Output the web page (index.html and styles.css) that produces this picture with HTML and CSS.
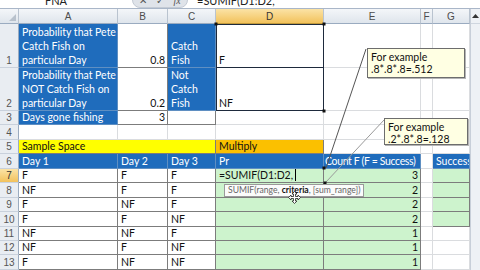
FILE: index.html
```html
<!DOCTYPE html>
<html>
<head>
<meta charset="utf-8">
<link rel="stylesheet" href="styles.css">
</head>
<body>
<div class="app">
  <div class="fbar">
    <div class="fbar-in">
      <span class="namebox">FNA</span>
      <span class="fbtns"><span>✕</span><span>✓</span><span class="fx">fx</span></span>
      <span class="formula">=SUMIF(D1:D2,</span>
    </div>
  </div>
  <div class="main">
    <div class="sheet">
      <div class="h corner"></div><div class="h">A</div><div class="h">B</div><div class="h">C</div><div class="h sel">D</div><div class="h">E</div><div class="h">F</div><div class="h">G</div>

      <div class="n">1</div><div class="c t blue"><span>Probability that Pete<br>Catch Fish on<br>particular Day</span></div><div class="c t r"><span>0.8</span></div><div class="c t blue"><span>Catch<br>Fish</span></div><div class="c d1"><span>F</span></div><div class="c"></div><div class="c"></div><div class="c"></div>

      <div class="n">2</div><div class="c t blue"><span>Probability that Pete<br>NOT Catch Fish on<br>particular Day</span></div><div class="c t r"><span>0.2</span></div><div class="c t blue"><span>Not<br>Catch<br>Fish</span></div><div class="c d2"><span>NF</span></div><div class="c"></div><div class="c"></div><div class="c"></div>

      <div class="n">3</div><div class="c t blue"><span>Days gone fishing</span></div><div class="c t r"><span>3</span></div><div class="c t"></div><div class="c"></div><div class="c"></div><div class="c"></div><div class="c"></div>

      <div class="n">4</div><div class="c"></div><div class="c"></div><div class="c"></div><div class="c"></div><div class="c"></div><div class="c"></div><div class="c"></div>

      <div class="n">5</div><div class="c t yellow span3"><span>Sample Space</span></div><div class="c t orange"><span>Multiply</span></div><div class="c"></div><div class="c"></div><div class="c"></div>

      <div class="n">6</div><div class="c t blue"><span>Day 1</span></div><div class="c t blue"><span>Day 2</span></div><div class="c t blue"><span>Day 3</span></div><div class="c t blue"><span>Pr</span></div><div class="c t blue tight"><span>Count F (F = Success)</span></div><div class="c"></div><div class="c t blue"><span>Success</span></div>

      <div class="n sel">7</div><div class="c t"><span>F</span></div><div class="c t"><span>F</span></div><div class="c t"><span>F</span></div><div class="c t green"><span class="edit">=SUMIF(D1:D2,<i class="caret"></i></span></div><div class="c t green r"><span>3</span></div><div class="c"></div><div class="c t green"></div>

      <div class="n">8</div><div class="c t"><span>NF</span></div><div class="c t"><span>F</span></div><div class="c t"><span>F</span></div><div class="c t green"></div><div class="c t green r"><span>2</span></div><div class="c"></div><div class="c t green"></div>

      <div class="n">9</div><div class="c t"><span>F</span></div><div class="c t"><span>NF</span></div><div class="c t"><span>F</span></div><div class="c t green"></div><div class="c t green r"><span>2</span></div><div class="c"></div><div class="c t green"></div>

      <div class="n">10</div><div class="c t"><span>F</span></div><div class="c t"><span>F</span></div><div class="c t"><span>NF</span></div><div class="c t green"></div><div class="c t green r"><span>2</span></div><div class="c"></div><div class="c t green"></div>

      <div class="n">11</div><div class="c t"><span>NF</span></div><div class="c t"><span>NF</span></div><div class="c t"><span>F</span></div><div class="c t green"></div><div class="c t green r"><span>1</span></div><div class="c"></div><div class="c"></div>

      <div class="n">12</div><div class="c t"><span>NF</span></div><div class="c t"><span>F</span></div><div class="c t"><span>NF</span></div><div class="c t green"></div><div class="c t green r"><span>1</span></div><div class="c"></div><div class="c"></div>

      <div class="n">13</div><div class="c t"><span>F</span></div><div class="c t"><span>NF</span></div><div class="c t"><span>NF</span></div><div class="c t green"></div><div class="c t green r"><span>1</span></div><div class="c"></div><div class="c"></div>
    </div>
    <div class="vscroll"><div class="vbtn"><svg width="7" height="4" viewBox="0 0 7 4"><path d="M0 4 L3.5 0 L7 4Z" fill="#333"/></svg></div><div class="vtrack"></div></div>
  </div>

  <svg class="lines" width="480" height="270" viewBox="0 0 480 270">
    <line x1="366" y1="49" x2="326" y2="168" stroke="#555" stroke-width="1"/>
    <line x1="384" y1="120" x2="326" y2="182" stroke="#9a9a9a" stroke-width="1"/>
    <rect x="214.5" y="22.5" width="3" height="3" fill="#111"/>
    <rect x="322.5" y="22.5" width="3" height="3" fill="#111"/>
    <rect x="322.5" y="109.5" width="3" height="3" fill="#111"/>
    <rect x="322.5" y="166.5" width="3" height="3" fill="#111"/>
    <rect x="323.5" y="181.5" width="3" height="3" fill="#111"/>
  </svg>

  <div class="callout c1">For example<br>.8*.8*.8=.512</div>
  <div class="callout c2">For example<br>.2*.8*.8=.128</div>

  <div class="tip">SUMIF(range, <b>criteria</b>, [sum_range])</div>
  <svg class="mouse" width="13" height="13" viewBox="0 0 13 13">
    <path d="M6.5 0.5 L9 3 L7.5 3 L7.5 5.5 L10 5.5 L10 4 L12.5 6.5 L10 9 L10 7.5 L7.5 7.5 L7.5 10 L9 10 L6.5 12.5 L4 10 L5.5 10 L5.5 7.5 L3 7.5 L3 9 L0.5 6.5 L3 4 L3 5.5 L5.5 5.5 L5.5 3 L4 3 Z" fill="#fff" stroke="#222" stroke-width="0.8"/>
  </svg>
</div>
</body>
</html>
```

FILE: styles.css
```css
* { box-sizing: border-box; margin: 0; padding: 0; }
html, body { width: 480px; height: 270px; overflow: hidden; background: #fff; }
body { font-family: Lato, "Liberation Sans", sans-serif; font-size: 10.5px; color: #111; }

.app { position: relative; width: 480px; height: 270px; display: flex; flex-direction: column; }

.fbar { height: 9px; overflow: hidden; border-bottom: 1px solid #a9b6c8; background: #fff; flex: none; }
.fbar-in { display: flex; align-items: center; height: 16px; margin-top: -8px; font-size: 11px; color: #222; }
.namebox { width: 132px; padding-left: 45px; }
.fbtns { width: 56px; height: 16px; background: #dfe3e9; border: 1px solid #c3cad4; border-radius: 0 0 8px 8px; display: flex; gap: 9px; justify-content: center; align-items: center; color: #555; font-size: 10px; }
.fx { font-style: italic; font-family: "Liberation Serif", serif; }
.formula { padding-left: 9px; }

.main { flex: 1; display: flex; min-height: 0; }
.sheet {
  width: 470px;
  display: grid;
  grid-template-columns: 19px 99px 50px 48px 108px 97px 12px 37px;
  grid-template-rows: 15px 44px 43px repeat(11, 14.45px);
  overflow: hidden;
}

.h {
  background: linear-gradient(#f4f6f9, #dfe5ec);
  border-right: 1px solid #b9c3cf;
  border-bottom: 1px solid #9aabc0;
  display: flex; align-items: center; justify-content: center;
  font-family: "Liberation Sans", sans-serif; font-size: 10px; color: #4c4c4c;
}
.h.sel { background: linear-gradient(#fbe3a6, #f2c25c); border-bottom-color: #c29a3c; color: #333; }
.corner { position: relative; }
.corner::after { content: ""; position: absolute; right: 2px; bottom: 2px; border-left: 7px solid transparent; border-bottom: 7px solid #b8c1cc; }

.n {
  background: #e9edf2;
  border-right: 1px solid #9aabc0;
  border-bottom: 1px solid #c9d1dc;
  display: flex; align-items: flex-end; justify-content: center;
  font-family: "Liberation Sans", sans-serif; font-size: 10px; color: #555; line-height: 13px;
}
.n.sel { background: linear-gradient(#fbe3a6, #f2c25c); color: #333; }

.c {
  border-right: 1px solid #dadcdf;
  border-bottom: 1px solid #dadcdf;
  display: flex; align-items: flex-end;
  padding: 0 2px 0 3px;
  line-height: 14px;
  white-space: nowrap;
  overflow: hidden;
  min-width: 0;
}
.c.t { border-right-color: #7c7c7c; border-bottom-color: #7c7c7c; }
.r { justify-content: flex-end; }
.blue { background: #1f6cbc; color: #fff; }
.blue.t { border-right-color: #5f8fc2; border-bottom-color: #5f8fc2; }
.yellow { background: #ffff00; }
.orange { background: #fbc000; }
.green { background: #cdf3cd; }
.span3 { grid-column: span 3; }
.tight { letter-spacing: -0.35px; padding-left: 1px; }

.d1, .d2 { border-right-color: #1e2a3c; border-bottom-color: #1e2a3c; box-shadow: inset 1px 0 0 #1e2a3c; }
.d1 { box-shadow: inset 1px 1px 0 #1e2a3c; }

.edit { display: flex; align-items: flex-end; }
.caret { display: inline-block; width: 1px; height: 12px; background: #000; margin-left: 2px; margin-bottom: 1px; }

.vscroll { width: 10px; display: flex; flex-direction: column; background: #eef1f5; border-left: 1px solid #c8cfd9; }
.vbtn { height: 15px; display: flex; align-items: center; justify-content: center; border-bottom: 1px solid #cfd6df; }
.vtrack { flex: 1; }

.lines { position: absolute; left: 0; top: 0; pointer-events: none; }

.callout {
  position: absolute;
  background: #ffffe3;
  border: 1px solid #6d6d6d;
  box-shadow: 1px 1px 0 #b5b5b5;
  font-size: 10.5px; line-height: 12px;
  padding: 2px 3px;
  color: #111;
  white-space: nowrap;
}
.c1 { left: 367px; top: 48px; width: 98px; height: 30px; }
.c2 { left: 384px; top: 118px; width: 84px; height: 27px; }

.tip {
  position: absolute; left: 224px; top: 184px;
  height: 13px; padding: 0 3px;
  background: #fbfbfb; border: 1px solid #9a9a9a;
  font-size: 8.6px; line-height: 11px; color: #666; white-space: nowrap;
}
.tip b { color: #111; }
.mouse { position: absolute; left: 288px; top: 191px; }
```
